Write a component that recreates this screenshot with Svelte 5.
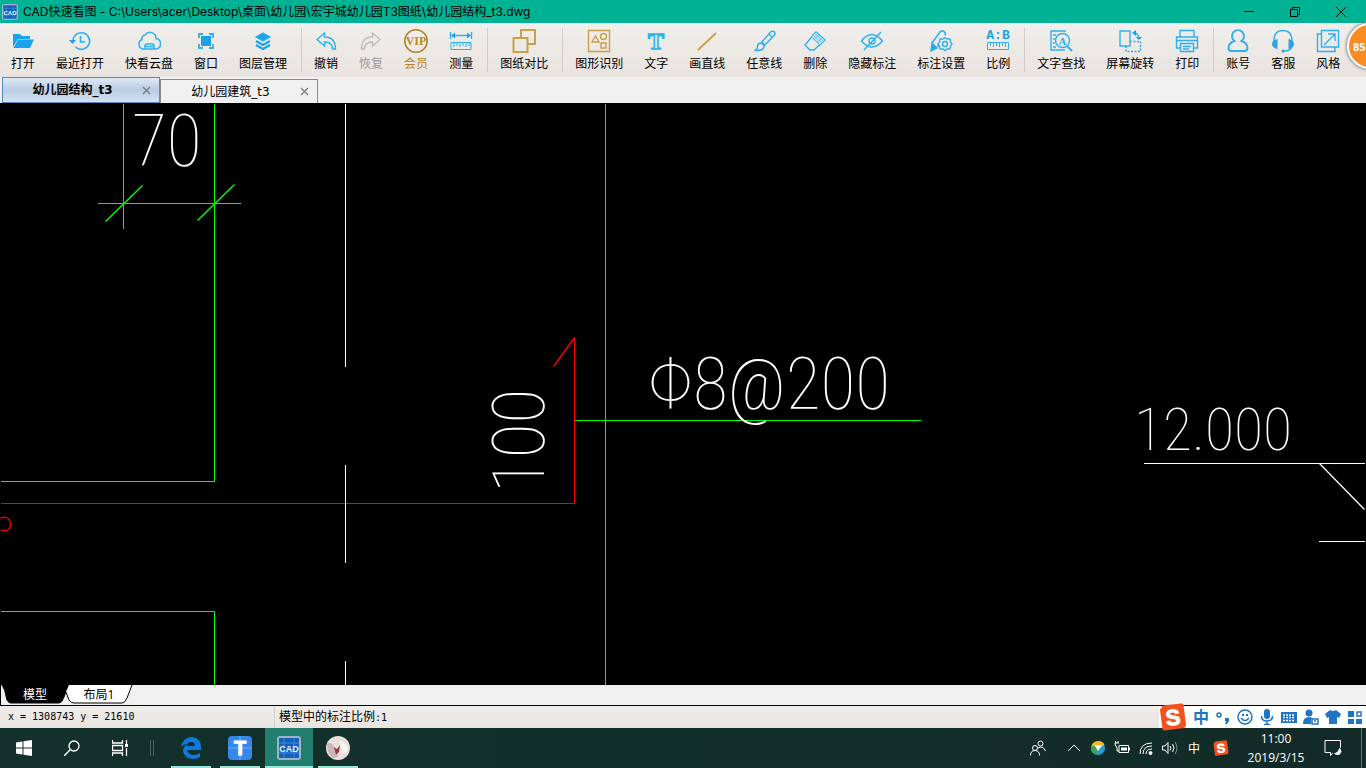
<script>
  let fileTab = $state(0);
  let sheet = $state(0);

  const files = ['幼儿园结构_t3', '幼儿园建筑_t3'];

  const groups = [
    [
      { icon: 'open', label: '打开' },
      { icon: 'recent', label: '最近打开' },
      { icon: 'cloud', label: '快看云盘' },
      { icon: 'window', label: '窗口' },
      { icon: 'layers', label: '图层管理' }
    ],
    [
      { icon: 'undo', label: '撤销' },
      { icon: 'redo', label: '恢复', tone: 'off' },
      { icon: 'vip', label: '会员', tone: 'gold' },
      { icon: 'measure', label: '测量' }
    ],
    [{ icon: 'compare', label: '图纸对比' }],
    [
      { icon: 'shapes', label: '图形识别' },
      { icon: 'text', label: '文字' },
      { icon: 'line', label: '画直线' },
      { icon: 'brush', label: '任意线' },
      { icon: 'eraser', label: '删除' },
      { icon: 'hide', label: '隐藏标注' },
      { icon: 'setting', label: '标注设置' },
      { icon: 'scale', label: '比例' }
    ],
    [
      { icon: 'find', label: '文字查找' },
      { icon: 'rotate', label: '屏幕旋转' },
      { icon: 'print', label: '打印' }
    ],
    [
      { icon: 'account', label: '账号' },
      { icon: 'service', label: '客服' },
      { icon: 'style', label: '风格' }
    ]
  ];
</script>

{#snippet cadLogo()}
  <rect x="1" y="1" width="22" height="22" rx="2" fill="#1560b8" stroke="#9fb2c4" stroke-width="2" />
  <path d="M2 7h20M2 17h20M7 2v20M17 2v20" stroke="#3c8be0" stroke-width="1" />
  <text x="12" y="16" text-anchor="middle" font-size="9" font-weight="700" fill="#e8f4ff">CAD</text>
{/snippet}

{#snippet sogou()}
  <path d="M3 5 Q2 3 4 2.500L22 .5Q24 0 24.500 2L27 22Q27 24.500 25 25L6 27.500Q4 28 3.500 26L1 7Q1 5 3 5Z" fill="#f4511e" />
  <text x="14" y="22" text-anchor="middle" font-size="22" font-weight="700" fill="#fff" stroke="#fff" stroke-width="1" transform="rotate(-6 14 14)">S</text>
{/snippet}

{#snippet icon(name)}
  <svg class="icon" viewBox="0 0 24 24" fill="none" stroke="#2fb0ee" stroke-width="1.4" aria-hidden="true">
    {#if name == 'open'}
      <path d="M2 18V5h7l2 2h8v3H7L2 18z" fill="#18a4ea" stroke="none" />
      <path d="M7 10.500h16L19 19H2.500z" fill="#18a4ea" stroke="none" />
    {:else if name == 'recent'}
      <path d="M5 12a8.300 8.300 0 1 1 2.500 6M12.500 7v6h4.500" stroke-width="1.600" />
      <path d="M1 11h7l-3.500 4z" fill="#18a4ea" stroke="none" />
    {:else if name == 'cloud'}
      <path d="M8 20H6a5 5 0 0 1-1-9.500a3.500 3.500 0 0 1 3-4.500a6 6 0 0 1 11 3.500a5.300 5.300 0 0 1 0 10.500h-2v-3q0-2-2-2H10q-2 0-2 2zM8 17.500h9M8 20h9" stroke-width="1.500" />
    {:else if name == 'window'}
      <rect x="7" y="7" width="10" height="10" fill="#18a4ea" stroke="none" />
      <path d="M5 9V5h4M15 5h4v4M19 15v4h-4M9 19H5v-4" stroke-width="1.800" />
    {:else if name == 'layers'}
      <path d="M12 4l7 4l-7 4l-7-4z" fill="#18a4ea" />
      <path d="M5 12l7 4l7-4M5 16l7 4l7-4" stroke="#18a4ea" stroke-width="2.200" />
    {:else if name == 'undo'}
      <path d="M3 10.500L10.500 4v4q11 0 11 12h-3q0-7-8-7v4z" />
    {:else if name == 'redo'}
      <path d="M21 10.500L13.500 4v4q-11 0-11 12h3q0-7 8-7v4z" stroke="#bcbcbc" />
    {:else if name == 'vip'}
      <circle cx="12" cy="12" r="11.200" stroke="#b0812a" stroke-width="1.500" />
      <text x="12" y="16" text-anchor="middle" class="serif" font-size="12" font-weight="700" fill="#b98a1e" stroke="none">VIP</text>
    {:else if name == 'measure'}
      <path d="M1.500 3v7M22.500 3v7M3 6.500h18" />
      <path d="M2 6.500l4-3v6zM22 6.500l-4-3v6z" fill="#18a4ea" stroke="none" />
      <path d="M2 13.500h20v7H2zM5 14v4M8 14v3M11 14v4M14 14v3M17 14v4M20 14v3" stroke-width="1" />
    {:else if name == 'compare'}
      <path d="M9 8V1h14v14h-7M1.500 9h14v14h-14z" stroke="#c8a04a" stroke-width="2" />
    {:else if name == 'shapes'}
      <path d="M1.500 1.500h21v21h-21zM5 13l3.500-6l3.500 6zM14 14h5v5h-5z" stroke="#c8a04a" />
      <circle cx="16.500" cy="7.500" r="3" stroke="#c8a04a" />
    {:else if name == 'text'}
      <text x="12" y="20" text-anchor="middle" class="serif" font-size="24" font-weight="700" fill="#d4eefa" stroke-width="1.500">T</text>
    {:else if name == 'line'}
      <path d="M3 21L21 4" stroke="#c8a04a" stroke-width="1.800" />
    {:else if name == 'brush'}
      <path d="M10 13L19 2.500q2-1 3.500.5q1 1.500 0 3L13 16zM17 5l3 3" />
      <path d="M8.500 14q4 1 3.500 4q-1 4-9.500 3.500q3-1 3-4q0-3 3-3.500z" />
    {:else if name == 'eraser'}
      <path d="M13 3l9 8l-11 10H7l-5-5z" />
      <path d="M13 3l9 8l-5 5l-9-8.500z" fill="#c4e6f6" stroke-width="1" />
      <path d="M10 6l9 8M12 4.500l8 7.500M11 10l6-5M14 13l6-5" stroke-width=".6" />
    {:else if name == 'hide'}
      <path d="M1.500 12q10-13 21 0q-11 12-21 0zM4 21L21 3" />
      <circle cx="12" cy="12" r="3" />
    {:else if name == 'setting'}
      <path d="M3 14L11 3q2-2 4-.5q2 1.500 1 4M8 18l2-2" stroke-width="1.600" />
      <path d="M2 22l1-8l5 5z" fill="#18a4ea" />
      <path d="M16 8.500l2 1.500h3l.5 3l1.500 2l-1.500 2l-.5 3h-3l-2 1.500l-2-1.500h-3l-.5-3L9 15l1.500-2l.5-3h3z" />
      <circle cx="16" cy="15" r="2.500" />
    {:else if name == 'scale'}
      <text x="12" y="10" text-anchor="middle" class="mono" font-size="13" font-weight="700" fill="#18a4ea" stroke="none">A:B</text>
      <path d="M1.500 13.500h21v7h-21zM4.500 14v3M7.500 14v4M10.500 14v3M13.500 14v4M16.500 14v3M19.500 14v4" stroke-width="1" />
    {:else if name == 'find'}
      <path d="M16 3V2H2v19h14M4 6h3M4 10h2M4 14h2M4 18h3" />
      <path d="M18 17l5 5" stroke-width="2" />
      <circle cx="13.500" cy="11.500" r="7" />
      <text x="13.500" y="15.500" text-anchor="middle" class="serif" font-size="11" font-weight="700" fill="#2fb0ee" stroke="none">A</text>
    {:else if name == 'rotate'}
      <path d="M2 2h10v15H2z" />
      <path d="M8 17v5.500h14.500V12.500H12" stroke-dasharray="2 1.500" stroke-width="1.600" />
      <path d="M16 4q4 0 5 5" />
      <path d="M14 4l4-3v6zM17.500 8h6.500l-3 3z" fill="#18a4ea" stroke="none" />
    {:else if name == 'print'}
      <path d="M5 8V1.500h14V8M5 19H1.500V8h21v11H19M2 11.500h20M5.500 14.500h13v8h-13zM8 17.500h8M8 20h6" />
    {:else if name == 'account'}
      <path d="M8.500 12a6 6 0 1 1 7 0q6 2 6 7q0 3-3 3h-13q-3 0-3-3q0-5 6-7z" stroke-width="1.900" />
    {:else if name == 'service'}
      <path d="M3 12q0-10.500 9-10.500T21 12M21 17q-1 5-8 5" />
      <path d="M6.500 10v10Q1 19 1 15t5.500-5zM17.500 10v10q5.500-1 5.500-5t-5.500-5z" fill="#35a0de" stroke="none" />
      <circle cx="12" cy="22" r="1.500" fill="#35a0de" stroke="none" />
    {:else if name == 'style'}
      <path d="M5.500 1.500h17V18h-17zM5.500 5H1.500v17.500H19V18M8 16L19 5M12 5h7v7" />
    {/if}
  </svg>
{/snippet}

<div class="app">
  <header class="title-bar">
    <svg class="app-icon" viewBox="0 0 24 24">{@render cadLogo()}</svg>
    <h1>CAD快速看图 - C:\Users\acer\Desktop\桌面\幼儿园\宏宇城幼儿园T3图纸\幼儿园结构_t3.dwg</h1>
    <div class="window-buttons">
      <button aria-label="最小化"><svg viewBox="0 0 12 12"><path d="M1 5.500h10" /></svg></button>
      <button aria-label="还原"><svg viewBox="0 0 12 12"><path d="M1.500 3.500h7v7h-7zM3.500 3V1.500h7v7H9" /></svg></button>
      <button aria-label="关闭"><svg viewBox="0 0 12 12"><path d="M1 1l10 10M11 1L1 11" /></svg></button>
    </div>
  </header>

  <!-- toolbar -->
  <div class="toolbar" role="toolbar">
    {#each groups as group, i}
      {#if i > 0}
        <span class="sep"></span>
      {/if}
      {#each group as tool}
        <button class="tool {tool.tone}">
          {@render icon(tool.icon)}
          <span>{tool.label}</span>
        </button>
      {/each}
    {/each}
    <button class="ball">85</button>
  </div>

  <!-- open files -->
  <nav class="file-tabs">
    {#each files as file, i}
      <div class="file-tab" class:active={fileTab == i}>
        <button class="name" onclick={() => (fileTab = i)}>{file}</button>
        <button class="close" aria-label="关闭 {file}">
          <svg viewBox="0 0 9 9"><path d="M1 1l7 7M8 1L1 8" stroke="#777" stroke-width="1.200" /></svg>
        </button>
      </div>
    {/each}
  </nav>

  <!-- drawing -->
  <main class="drawing">
    <svg width="100%" height="100%">
      <g transform="translate(.5 .5)" fill="none" stroke-width="1">
        <g stroke="#00ff00">
          <path d="M123 0V125M214 0V378H0M97 100H240M0 508H214V582M574 317H920M605 0V582" shape-rendering="crispEdges" />
          <path d="M105 118L142 82M197 117L234 81" stroke-width="1.400" />
        </g>
        <g stroke="#ff0000">
          <path d="M0 400H574V234" shape-rendering="crispEdges" />
          <path d="M574 234L553 263M0 415q3-2 6-1q4 2 4 7t-4 6q-3 1-6-1" stroke-width="1.300" />
        </g>
        <g stroke="#fff">
          <path d="M345 0V263M345 361V459M345 557V582M1143 360H1364M1318 438H1364" shape-rendering="crispEdges" />
          <path d="M1319 360L1364 406" stroke-width="1.300" />
        </g>
      </g>
      <g class="cad-text">
        <text class="dim" x="132" y="63">70</text>
        <text class="dim" x="648" y="306">Φ8@200</text>
        <text class="dim" transform="translate(544 390) rotate(-90)">100</text>
        <text class="level" x="1134" y="347">12.000</text>
      </g>
    </svg>
  </main>

  <!-- model / layout -->
  <nav class="sheets">
    <button class="sheet" class:active={sheet == 0} onclick={() => (sheet = 0)}>
      <svg viewBox="0 0 68 19" aria-hidden="true"><path d="M1 0q3 4 4 11t5 7H58q3 0 5-6t5-12z" /></svg>
      <span>模型</span>
    </button>
    <button class="sheet" class:active={sheet == 1} onclick={() => (sheet = 1)}>
      <svg viewBox="0 0 68 19" aria-hidden="true"><path d="M1 7l3 8q2 3 5 3H57q3 0 5-5l5-13H4z" stroke="none" /><path d="M1 7l3 8q2 3 5 3H57q3 0 5-5l5-13" /></svg>
      <span>布局1</span>
    </button>
  </nav>

  <footer class="status">
    <span class="coords">x = 1308743 y = 21610</span>
    <span class="scale">模型中的标注比例<b>:1</b></span>
    <div class="ime">
      <svg class="ime-logo" viewBox="0 0 28 28">{@render sogou()}</svg>
      <span class="ime-mode">中</span>
      <svg viewBox="0 0 16 16"><circle cx="4" cy="6" r="2" fill="none" stroke="#1f74c4" stroke-width="1.500" /><path d="M10 9h4v3l-2 3h-2l1-3h-1z" /></svg>
      <svg viewBox="0 0 16 16"><g fill="none" stroke="#1f74c4" stroke-width="1.500"><circle cx="8" cy="8" r="7" /><path d="M4 9q4 5 8 0" /></g><path d="M5 5h2v2H5zM9 5h2v2H9z" /></svg>
      <svg viewBox="0 0 16 16"><rect x="5" y="0" width="6" height="10" rx="3" /><path d="M2.500 7q0 5 5.500 5t5.500-5M8 12v4M5 15.500h6" fill="none" stroke="#1f74c4" stroke-width="1.500" /></svg>
      <svg viewBox="0 0 16 16"><path d="M0 3h16v11H0z" /><path d="M2 6h12M2 8.500h12M2 11.500h12" stroke="#fff" stroke-width="1.300" stroke-dasharray="2 1" /></svg>
      <svg viewBox="0 0 16 16"><circle cx="6" cy="4" r="3.500" /><path d="M0 15q0-7 6-7q3 0 4 2H8v5z" /><path d="M9 10h6v5H9zM11 12h2" fill="#fff" stroke="#1f74c4" stroke-width="1.500" /></svg>
      <svg viewBox="0 0 16 16"><path d="M5 1q3 2 6 0l5 4l-2 4l-2-1v7H4V8L2 9L0 5z" /></svg>
      <svg viewBox="0 0 16 16"><path d="M1 2h6v6H1zM1 10h6v5H1zM9 10h6v5H9z" /><path d="M10 3h4v4h-4z" fill="none" stroke="#1f74c4" stroke-width="1.500" /></svg>
    </div>
  </footer>

  <!-- taskbar -->
  <div class="taskbar">
    <button class="task" aria-label="开始">
      <svg class="small" viewBox="0 0 16 16"><path d="M0 2.500l6.500-1v6H0zM7.500 1.300L16 0v7.500H7.500zM0 8.500h6.500v6l-6.500-1zM7.500 8.500H16V16l-8.500-1.300z" fill="#fff" stroke="none" /></svg>
    </button>
    <button class="task" aria-label="搜索">
      <svg class="small" viewBox="0 0 16 16"><path d="M6.500 9.500L0 16" /><circle cx="10" cy="6" r="5" /></svg>
    </button>
    <button class="task" aria-label="任务视图">
      <svg class="small" viewBox="0 0 16 16"><path d="M.5 0v3h10V0M.5 5.500h10v5H.5zM.5 16v-3h10v3M14.500 0v4M14.500 8v8" /><path d="M13 4h3v3h-3z" fill="#fff" stroke="none" /></svg>
    </button>
    <span class="grip"></span>
    <button class="task running" aria-label="Edge">
      <svg viewBox="0 0 24 24"><path d="M2 11Q4 1 13 1q9 1 9 10v3H8q1 5 7 5q3 0 6-2v4q-3 2-7 2q-9-1-10-8q0-5 6-8q-5 1-8 4zm6-1h8q0-4-4-4t-4 4z" fill="#0c7bdc" stroke="none" /></svg>
    </button>
    <button class="task running" aria-label="T">
      <svg viewBox="0 0 24 24"><rect width="24" height="24" rx="4" fill="#3588ea" stroke="none" /><path d="M0 12h24M12 0v24" stroke="#6badf7" /><text x="12" y="19" text-anchor="middle" font-size="20" font-weight="700" fill="#fff" stroke="#fff">T</text></svg>
    </button>
    <button class="task running current" aria-label="CAD快速看图">
      <svg viewBox="0 0 24 24" class="plain">{@render cadLogo()}</svg>
    </button>
    <button class="task running" aria-label="照片">
      <svg viewBox="0 0 24 24"><circle cx="12" cy="12" r="12" fill="#e9dfdd" stroke="none" /><path d="M1 8Q5 5 9 12l3 9l-5 1Q1 18 1 8z" fill="#cdb4b8" stroke="none" /><path d="M8 11l3 2l3-4l-1 7l-3 3z" fill="#8e3f4c" stroke="none" /><path d="M13 4q8 2 9 10l-5 4z" fill="#f8f3ee" stroke="none" /></svg>
    </button>

    <div class="tray">
      <svg class="people" viewBox="0 0 16 16"><circle cx="10.500" cy="3.500" r="2.500" /><circle cx="5" cy="8" r="2.500" /><path d="M.5 15.500q0-5 4.500-5t4.500 5M8 8q5-3 7.500 3" /></svg>
      <svg viewBox="0 0 16 16"><path d="M2 11l6-6l6 6" /></svg>
      <svg viewBox="0 0 16 16"><circle cx="8" cy="8" r="7" fill="#2a9bd8" stroke="none" /><path d="M8 8L1.500 5.500Q4 1 8 1q5 0 6.500 4z" fill="#f5b921" stroke="none" /><path d="M8 8v7Q1 14 1 8l.5-2.500z" fill="#35a853" stroke="none" /><path d="M5 5.500h7L8 11z" fill="#fff" stroke="none" /></svg>
      <svg viewBox="0 0 16 16"><path d="M5 5.500h9.500v7H5zM15.500 7.500v3M1 3h4M1.500 1v2M4 1v2M1 3q0 4 2 4v4h2" /><path d="M7 7.500h6v3H7z" fill="#fff" stroke="none" /></svg>
      <svg viewBox="0 0 16 16"><path d="M2 14Q2 3 14 3M5 14q0-8 9-8M8 14q0-5 6-5" /><circle cx="12.500" cy="13" r="1.500" fill="#fff" /></svg>
      <svg viewBox="0 0 16 16"><path d="M.5 6H3l3-3.500v11L3 10H.5zM8 6q2 2 0 4.500M10.500 4q3 4 0 8" /><path d="M13 2q4 6 0 12" stroke="#7b8d89" /></svg>
      <span class="lang">中</span>
      <svg viewBox="0 0 28 28" class="plain">{@render sogou()}</svg>
    </div>
    <time class="clock">
      <span>11:00</span>
      <span>2019/3/15</span>
    </time>
    <button class="notice" aria-label="通知">
      <svg viewBox="0 0 18 18"><path d="M1 1.500h15.500V9M9 14l-2.500 2.500V13.500H1V1.500" /><path d="M15 9q0 4-5 5.500q4 3 6.500 0T15 9z" fill="#fff" stroke="none" /></svg>
    </button>
    <span class="desktop-edge"></span>
  </div>
</div>

<style>
:global(body) {
  margin: 0;
  background: #000;
}

.app {
  display: flex;
  flex-direction: column;
  min-height: 100vh;
  overflow: hidden;
  font-family: "Open Sans", "Noto Sans CJK SC", sans-serif;
  font-size: 12px;
  color: #000;
}

button {
  border: 0;
  padding: 0;
  margin: 0;
  background: none;
  font: inherit;
  color: inherit;
}

svg {
  display: block;
  flex: none;
}

svg text {
  font-family: "Liberation Sans", sans-serif;
}

svg .serif {
  font-family: "Liberation Serif", serif;
}

svg .mono {
  font-family: "Liberation Mono", monospace;
}

/* title bar */
.title-bar {
  display: flex;
  align-items: center;
  height: 23px;
  padding-left: 2px;
  background: #00b294;
}

.app-icon {
  width: 16px;
  height: 16px;
}

h1 {
  flex: 1;
  margin: 0 0 0 5px;
  font-family: Inter, "Noto Sans CJK SC", sans-serif;
  font-size: 12px;
  font-weight: 400;
  line-height: 20px;
  white-space: nowrap;
}

.window-buttons {
  display: flex;
}

.window-buttons button {
  display: flex;
  justify-content: center;
  width: 46px;
}

.window-buttons svg {
  width: 12px;
  height: 12px;
  fill: none;
  stroke: #000;
}

.window-buttons button:last-child {
  margin-right: 2px;
}

/* toolbar */
.toolbar {
  position: relative;
  display: flex;
  gap: 1px;
  height: 54px;
  padding-left: 1px;
  background: linear-gradient(#f0efeb, #e9e3df);
}

.tool {
  display: flex;
  flex-direction: column;
  align-items: center;
  padding: 6px 10px 0;
  line-height: 16px;
  white-space: nowrap;
}

.tool span {
  margin-top: 3px;
}

.tool.off {
  color: #9a9a9a;
}

.tool.gold {
  color: #b8862b;
}

.icon {
  width: 24px;
  height: 24px;
}

.sep {
  width: 1px;
  height: 44px;
  margin: 5px 1px 0 3px;
  background: #cfcdca;
}

.ball {
  position: absolute;
  top: 0;
  right: -27px;
  width: 46px;
  height: 46px;
  padding-left: 4px;
  border: 2px solid #fff;
  border-radius: 50%;
  background: #fb8b24;
  box-shadow: 0 0 3px 1px #8a8a8a;
  color: #fff;
  font-size: 11px;
  font-weight: 700;
  text-align: left;
}

/* file tabs */
.file-tabs {
  display: flex;
  align-items: flex-end;
  height: 26px;
  padding-left: 2px;
  background: #f0f0f0;
}

.file-tab {
  display: flex;
  align-items: center;
  box-sizing: border-box;
  width: 158px;
  height: 24px;
  padding-right: 8px;
  border: 1px solid #8a8a8a;
  border-bottom: 0;
  font-family: "DejaVu Sans", "Noto Sans CJK SC", sans-serif;
}

.file-tab.active {
  height: 26px;
  border: 1px solid #5a86bf;
  background: linear-gradient(#dfe8f3, #b8cce4 50%, #d6e3f1);
  font-weight: 700;
}

.file-tab .name {
  flex: 1;
  line-height: 20px;
}

.file-tab svg {
  width: 9px;
  height: 9px;
}

/* drawing */
.drawing {
  flex: 1;
  min-height: 0;
  background: #000;
  display: grid;
  overflow: hidden;
}

.cad-text text {
  font-family: "Roboto Condensed", Roboto, sans-serif;
  font-weight: 100;
  fill: #fff;
}

.cad-text .dim {
  font-size: 72px;
}

.cad-text .level {
  font-size: 60px;
}

/* sheets */
.sheets {
  display: flex;
  height: 20px;
  border-bottom: 1px solid #000;
  border-left: 1px solid #000;
  background: #f0f0f0;
}

.sheet {
  display: grid;
  width: 64px;
}

.sheet svg,
.sheet span {
  grid-area: 1 / 1;
}

.sheet svg {
  width: 68px;
  height: 19px;
  fill: #fff;
  stroke: #000;
}

.sheet span {
  z-index: 1;
  line-height: 20px;
}

.sheet.active {
  color: #fff;
}

.sheet.active svg {
  fill: #000;
}

/* status */
.status {
  display: flex;
  height: 22px;
  line-height: 22px;
  background: linear-gradient(#efedea, #e9e4e0);
}

.coords,
.scale b {
  font-family: "DejaVu Sans Mono", monospace;
  font-size: 10px;
  font-weight: 400;
}

.coords {
  box-sizing: border-box;
  width: 274px;
  padding-left: 8px;
}

.scale {
  flex: 1;
  padding-left: 4px;
  border-left: 1px solid #d0cecb;
}

.ime {
  display: flex;
  align-items: center;
  gap: 6px;
  padding-right: 3px;
  background: #fff;
}

.ime svg {
  width: 16px;
  height: 16px;
  fill: #1f74c4;
}

/* the logo hangs over both edges of its bar */
.ime .ime-logo {
  position: relative;
  z-index: 1;
  width: 28px;
  height: 28px;
}

.ime-mode {
  width: 16px;
  font-size: 16px;
  font-weight: 700;
  color: #1f74c4;
}

/* taskbar */
.taskbar {
  display: flex;
  gap: 1px;
  height: 40px;
  background: linear-gradient(90deg, #14302c, #12302a 50%, #122b28);
  color: #fff;
}

.taskbar svg {
  width: 24px;
  height: 24px;
  fill: none;
  stroke: #fff;
}

.taskbar .plain {
  stroke: none;
}

.taskbar .small {
  width: 16px;
  height: 16px;
  stroke-width: 1.300;
}

.task {
  display: grid;
  place-items: center;
  width: 48px;
}

.task:not(.running) {
  margin-right: -1px;
}

.task.running {
  background: linear-gradient(#96e6d8, #96e6d8) bottom / 40px 2px no-repeat;
}

.task.current {
  background: linear-gradient(#96e6d8, #96e6d8) bottom / 48px 2px no-repeat #227f70;
}

.grip {
  width: 2px;
  height: 16px;
  margin: 12px 12px 0 6px;
  border: solid #44605b;
  border-width: 0 1px;
}

.tray {
  display: flex;
  flex: 1;
  align-items: center;
  justify-content: flex-end;
  gap: 8px;
}

.tray svg {
  width: 16px;
  height: 16px;
}

.tray .people {
  margin-right: 12px;
}

.lang {
  width: 16px;
  margin-right: 3px;
  text-align: center;
}

.clock {
  display: flex;
  flex-direction: column;
  justify-content: center;
  width: 92px;
  line-height: 19px;
  text-align: center;
}

.notice {
  display: grid;
  place-items: center;
  width: 20px;
}

.notice svg {
  width: 18px;
  height: 18px;
}

.desktop-edge {
  width: 4px;
  margin-left: 17px;
  border-left: 1px solid #5e726e;
}
</style>
